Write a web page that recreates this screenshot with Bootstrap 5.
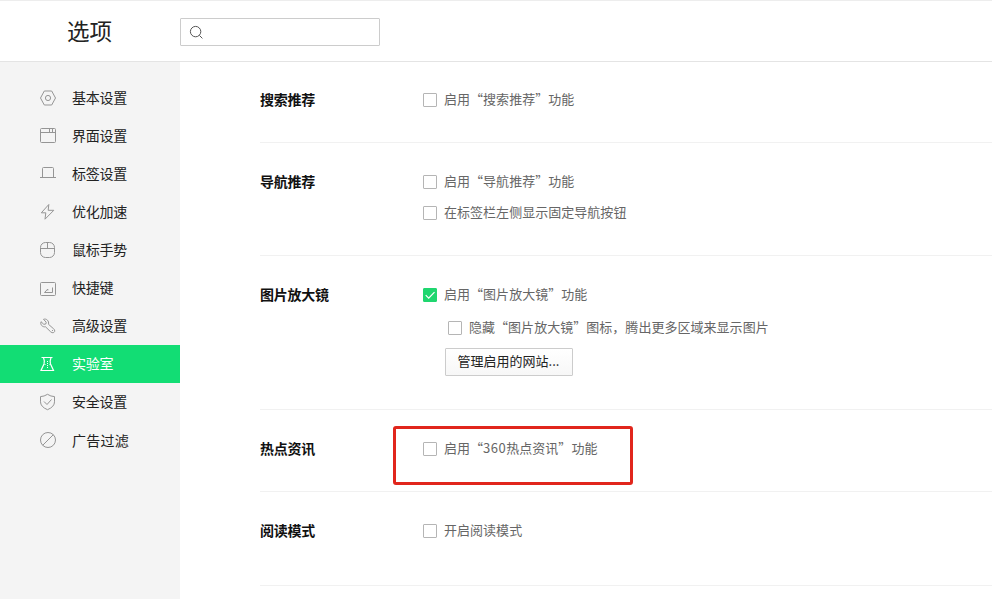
<!DOCTYPE html>
<html lang="zh-CN">
<head>
<meta charset="utf-8">
<meta name="viewport" content="width=device-width, initial-scale=1">
<title>选项</title>
<link href="https://cdn.jsdelivr.net/npm/bootstrap@5.3.0/dist/css/bootstrap.min.css" rel="stylesheet">
<style>
body{font-family:"Noto Sans CJK SC",sans-serif;font-size:13px;line-height:20px;color:#222;height:599px;overflow:hidden;background:#fff}
.topbar{height:62px;border-top:1px solid #ededed;border-bottom:1px solid #e4e4e4}
.brand-title{width:180px;padding:0 0 2px 67px;font-size:22.5px;line-height:32px;color:#222}
.search-box{width:200px;height:28px;margin-top:2px;border:1px solid #ccc;border-radius:1px;padding-left:8px}
.search-box input{background:none;outline:0;min-width:0}
.page-body{height:537px}
.side{width:180px;background:#f4f4f4;padding-top:17px}
.side .nav-link{height:38px;padding:0 0 0 39px;gap:15px;color:#222;font-size:14px;letter-spacing:-.25px;border-radius:0}
.side .nav-link span{padding-bottom:2px}
.side .nav-link:last-child span{padding-bottom:0;letter-spacing:.25px}
.side .nav-link svg{width:18px;height:18px;flex:none;stroke:#959595}
.side .nav-link.active{background:#12dd74;color:#fff}
.side .nav-link.active svg{stroke:#fff}
svg{fill:none;stroke-width:1}
.panel{padding-left:80px;margin-top:-1px}
.opt-group{border-bottom:1px solid #f1f1f1;padding-top:29px}
.opt-group h2{width:163px;font-size:14px;letter-spacing:-.25px;font-weight:700;line-height:18px;color:#111}
.g-sm{height:82px}.g-md{height:113px}.g-lg{height:154px}.g-end{height:94px}
.opt{height:20px;gap:7px;color:#666;letter-spacing:.03px}
.opt span{padding-bottom:2px}
.opt .form-check-input{width:14px;height:14px;margin:0;border:1px solid #b5b5b5;border-radius:1px;flex:none;box-shadow:none}
.opt .form-check-input:checked{background-color:#1fd66f;border-color:#1fd66f;background-size:14px;background-image:url("data:image/svg+xml,%3csvg xmlns='http://www.w3.org/2000/svg' viewBox='0 0 14 14'%3e%3cpath d='M2.700 7.200l3 3 5.800-6' fill='none' stroke='%23fff' stroke-width='1.200'/%3e%3c/svg%3e")}
.opt-second{margin-top:11px}
.opt-nested{margin:13px 0 0 25px}
.digits{letter-spacing:.5px}
.btn-site{width:128px;height:28px;padding:0 1px 2px 0;margin:10px 0 0 22px;font-size:13px;line-height:24px;color:#222;border:1px solid #ccc;border-radius:1px;background:linear-gradient(#fff,#f7f7f7)}
.hot-frame{left:-30px;top:-13px;width:240px;height:59px;border:3px solid #e1261c;border-radius:3px;pointer-events:none}
</style>
</head>
<body>
<header class="topbar d-flex align-items-center">
  <div class="brand-title">选项</div>
  <label class="search-box d-flex align-items-center">
    <svg width="15" height="15" viewBox="0 0 15 15" stroke="#555"><circle cx="6.6" cy="6.6" r="5.2"/><path d="M10.400 10.400l3 3"/></svg>
    <input class="border-0 flex-fill" type="text" aria-label="搜索">
  </label>
</header>
<div class="page-body d-flex">
  <nav class="side nav nav-pills flex-column flex-nowrap flex-shrink-0">
    <a class="nav-link d-flex align-items-center" href="#"><svg viewBox="0 0 18 18"><path d="M5.300 2h7.400l3.800 7-3.800 7H5.300L1.500 9z" stroke-linejoin="round"/><circle cx="9" cy="9" r="2.600"/></svg><span>基本设置</span></a>
    <a class="nav-link d-flex align-items-center" href="#"><svg viewBox="0 0 18 18"><rect x="1.500" y="1.500" width="15" height="14" rx="1"/><path d="M1.500 5.500h15M10.500 1.500v4M13.500 1.500v4"/></svg><span>界面设置</span></a>
    <a class="nav-link d-flex align-items-center" href="#"><svg viewBox="0 0 18 18"><path d="M3.500 12.500v-9q0-1 1-1h9q1 0 1 1v9M1 12.500h16"/></svg><span>标签设置</span></a>
    <a class="nav-link d-flex align-items-center" href="#"><svg viewBox="0 0 18 18"><path d="M9.800 1.500L2.300 9.800h4.500l-.8 6.400L14.800 7.300H9.200z" stroke-linejoin="round"/></svg><span>优化加速</span></a>
    <a class="nav-link d-flex align-items-center" href="#"><svg viewBox="0 0 18 18"><rect x="1.500" y="1.500" width="14" height="15" rx="5"/><path d="M1.500 7.500h14M8.500 1.500v6"/></svg><span>鼠标手势</span></a>
    <a class="nav-link d-flex align-items-center" href="#"><svg viewBox="0 0 18 18"><rect x="1.500" y="3.500" width="15" height="13" rx="1"/><path d="M13.500 8.500v5h-8l3.300-3.500v1.500"/></svg><span>快捷键</span></a>
    <a class="nav-link d-flex align-items-center" href="#"><svg viewBox="0 0 18 18"><path d="M4.500 2.300l2.700 2.900-.4 1.800-2 .3L2 4.700C1 7.600 3.300 10.300 6.500 9.800l5 4.900q1.500 1.500 3.200.9 1.500-1 .9-2.600-.2-.6-1-1.200L9.500 7.300C10.300 4 7.500 1.200 4.500 2.300z" stroke-linejoin="round"/><path d="M13 13.500h1"/></svg><span>高级设置</span></a>
    <a class="nav-link active d-flex align-items-center" href="#"><svg viewBox="0 0 18 18"><path d="M2.500 2.500h11M4.500 2.500q1.500 4 .5 6.500L2 15.500h12.500L11.500 9q-1-2.500.5-6.500" stroke-width="1.200"/><path d="M8.500 6v7M5.500 9.500h1M10.500 9.500h1" stroke-dasharray="1 1"/></svg><span>实验室</span></a>
    <a class="nav-link d-flex align-items-center" href="#"><svg viewBox="0 0 18 18"><path d="M8.500 1.300q3.300 2.200 7 2.300v5.200q0 5-7 7.900-7-2.900-7-7.900V3.600q3.700-.1 7-2.300z" stroke-linejoin="round"/><path d="M5 8.500l3 3 4.500-5"/></svg><span>安全设置</span></a>
    <a class="nav-link d-flex align-items-center" href="#"><svg viewBox="0 0 18 18"><circle cx="9" cy="9" r="7.500"/><path d="M14.300 3.700L3.700 14.300"/></svg><span>广告过滤</span></a>
  </nav>
  <main class="panel flex-fill">
    <section class="opt-group g-sm d-flex">
      <h2 class="m-0">搜索推荐</h2>
      <div><label class="opt d-flex align-items-center"><input class="form-check-input" type="checkbox"><span>启用“搜索推荐”功能</span></label></div>
    </section>
    <section class="opt-group g-md d-flex">
      <h2 class="m-0">导航推荐</h2>
      <div>
        <label class="opt d-flex align-items-center"><input class="form-check-input" type="checkbox"><span>启用“导航推荐”功能</span></label>
        <label class="opt opt-second d-flex align-items-center"><input class="form-check-input" type="checkbox"><span>在标签栏左侧显示固定导航按钮</span></label>
      </div>
    </section>
    <section class="opt-group g-lg d-flex">
      <h2 class="m-0">图片放大镜</h2>
      <div>
        <label class="opt d-flex align-items-center"><input class="form-check-input" type="checkbox" checked><span>启用“图片放大镜”功能</span></label>
        <label class="opt opt-nested d-flex align-items-center"><input class="form-check-input" type="checkbox"><span>隐藏“图片放大镜”图标，腾出更多区域来显示图片</span></label>
        <button class="btn btn-site" type="button">管理启用的网站...</button>
      </div>
    </section>
    <section class="opt-group g-sm d-flex">
      <h2 class="m-0">热点资讯</h2>
      <div class="position-relative">
        <label class="opt d-flex align-items-center"><input class="form-check-input" type="checkbox"><span>启用“<b class="digits fw-normal">360</b>热点资讯”功能</span></label>
        <span class="hot-frame position-absolute"></span>
      </div>
    </section>
    <section class="opt-group g-end d-flex">
      <h2 class="m-0">阅读模式</h2>
      <div><label class="opt d-flex align-items-center"><input class="form-check-input" type="checkbox"><span>开启阅读模式</span></label></div>
    </section>
  </main>
</div>
<script src="https://cdn.jsdelivr.net/npm/bootstrap@5.3.0/dist/js/bootstrap.bundle.min.js"></script>
</body>
</html>
